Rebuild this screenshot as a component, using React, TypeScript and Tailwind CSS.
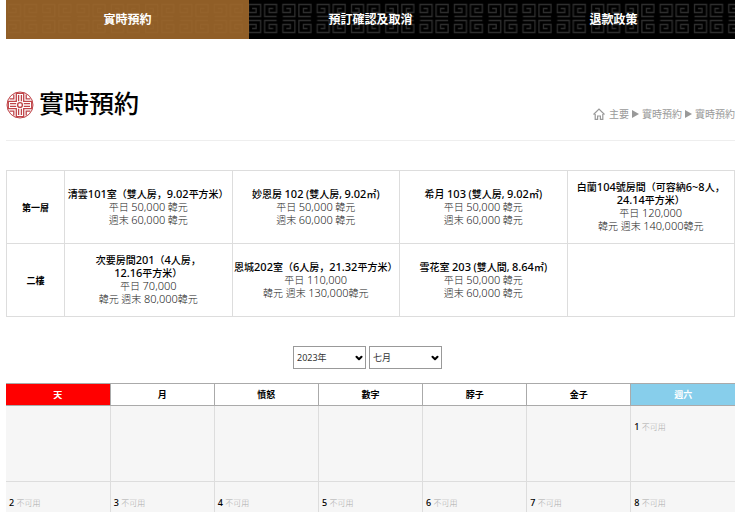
import { ChevronDown } from "lucide-react";
import { Fragment } from "react";

const menu = [
  { label: "實時預約", active: true },
  { label: "預訂確認及取消", active: false },
  { label: "退款政策", active: false },
];

const floors = [
  {
    name: "第一層",
    rooms: [
      { title: ["清雲101室（雙人房，9.02平方米）"], prices: ["平日 50,000 韓元", "週末 60,000 韓元"] },
      { title: ["妙恩房 102 (雙人房, 9.02㎡)"], prices: ["平日 50,000 韓元", "週末 60,000 韓元"] },
      { title: ["希月 103 (雙人房, 9.02㎡)"], prices: ["平日 50,000 韓元", "週末 60,000 韓元"] },
      { title: ["白蘭104號房間（可容納6~8人，", "24.14平方米）"], prices: ["平日 120,000", "韓元 週末 140,000韓元"] },
    ],
  },
  {
    name: "二樓",
    rooms: [
      { title: ["次要房間201（4人房，", "12.16平方米）"], prices: ["平日 70,000", "韓元 週末 80,000韓元"] },
      { title: ["恩城202室（6人房，21.32平方米）"], prices: ["平日 110,000", "韓元 週末 130,000韓元"] },
      { title: ["雪花室 203 (雙人間, 8.64㎡)"], prices: ["平日 50,000 韓元", "週末 60,000 韓元"] },
      { title: [], prices: [] },
    ],
  },
];

const weekdays = ["天", "月", "憤怒", "數字", "脖子", "金子", "週六"];
const weeks = [
  [0, 0, 0, 0, 0, 0, 1],
  [2, 3, 4, 5, 6, 7, 8],
];

function FretPattern() {
  return (
    <svg className="absolute inset-0 h-full w-full" aria-hidden="true">
      <defs>
        <path
          id="spiral"
          d="M0.5 12.5H12.5V0.5H0.5V8.5H8V4.5H4"
          fill="none"
          stroke="#2e2e2e"
          strokeWidth="1.3"
        />
        <pattern id="fret" width="34.3" height="39" patternUnits="userSpaceOnUse">
          <use href="#spiral" transform="translate(2 4)" />
          <use href="#spiral" transform="translate(31 4) scale(-1 1)" />
          <use href="#spiral" transform="translate(2 33) scale(1 -1)" />
          <use href="#spiral" transform="translate(31 33) scale(-1 -1)" />
        </pattern>
      </defs>
      <rect width="100%" height="100%" fill="url(#fret)" />
    </svg>
  );
}

function Seal() {
  return (
    <svg viewBox="0 0 28 28" className="mt-1 size-7 shrink-0" fill="none" stroke="#bf4449" strokeWidth="1.3" aria-hidden="true">
      <circle cx="14" cy="14" r="13" strokeWidth="1" />
      <circle cx="14" cy="14" r="2.4" strokeWidth="1.4" />
      {[0, 90, 180, 270].map((angle) => (
        <g key={angle} transform={`rotate(${angle} 14 14)`}>
          <path d="M12.6 4V10.2M15.4 4V10.2M10.3 1.8V10.3H1.8M7.8 3.6V7.8H3.6M10.3 2.3H17.7" />
        </g>
      ))}
    </svg>
  );
}

function HomeIcon() {
  return (
    <svg viewBox="0 0 12 12" className="mr-px size-3" fill="none" stroke="#999" strokeWidth="1.2" aria-hidden="true">
      <path d="M0.5 6.5L6 1L11.5 6.5M2.2 6V11.4H4.6V8H7.4V11.4H9.8V6" />
    </svg>
  );
}

function Arrow() {
  return (
    <svg viewBox="0 0 7 8" className="h-2 w-[7px]" fill="#999" aria-hidden="true">
      <path d="M0 0L7 4L0 8Z" />
    </svg>
  );
}

// The digits are set one size larger than the characters around them.
function Mixed({ text }: { text: string }) {
  return (
    <>
      {text.split(/([\d.,~]*\d)/).map((part, i) =>
        i % 2 ? <span key={i} className="text-[11px] leading-none">{part}</span> : <Fragment key={i}>{part}</Fragment>
      )}
    </>
  );
}

function Picker({ label, options }: { label: string; options: string[] }) {
  return (
    <div className="relative">
      <select
        aria-label={label}
        className="block h-[23px] w-[73px] appearance-none border border-[#999] bg-white pl-[3px] text-[9px] text-[#333]"
      >
        {options.map((option) => (
          <option key={option}>{option}</option>
        ))}
      </select>
      <ChevronDown className="pointer-events-none absolute top-[7px] right-[2px] size-[10px] text-black" strokeWidth={5} />
    </div>
  );
}

export default function App() {
  return (
    <div className="h-screen overflow-hidden bg-white pr-[5px] pl-[6px] font-['Noto_Sans','Noto_Sans_CJK_KR',sans-serif] text-[#222]">
      <nav className="relative bg-black">
        <FretPattern />
        <ul className="relative grid grid-cols-3">
          {menu.map((item) => (
            <li key={item.label}>
              <a
                href="#"
                className={`flex h-[39px] items-center justify-center text-xs font-bold text-white ${
                  item.active ? "bg-[#a0682b]/90" : ""
                }`}
              >
                {item.label}
              </a>
            </li>
          ))}
        </ul>
      </nav>

      <header className="mt-[46px] flex items-end justify-between border-b border-[#eee] pb-[19px]">
        <div className="flex items-center gap-[5px]">
          <Seal />
          <h1 className="text-[25px] leading-9 font-medium text-black">實時預約</h1>
        </div>
        <div className="flex items-center gap-[3px] text-[10px] leading-[14px] text-[#999]">
          <HomeIcon />
          <a href="#">主要</a>
          <Arrow />
          <a href="#">實時預約</a>
          <Arrow />
          <a href="#">實時預約</a>
        </div>
      </header>

      <table className="mt-[29px] w-full table-fixed border-collapse text-center text-[10px] leading-[13px]">
        <colgroup>
          <col className="w-[58px]" />
          <col />
          <col />
          <col />
          <col />
        </colgroup>
        <tbody>
          {floors.map((floor) => (
            <tr key={floor.name} className="h-[73px]">
              <th className="border border-[#ddd] text-[9px] font-bold text-black">{floor.name}</th>
              {floor.rooms.map((room, i) => (
                <td key={i} className="border border-[#ddd] whitespace-nowrap">
                  {room.title.map((line) => (
                    <strong key={line} className="block font-medium text-black">
                      <Mixed text={line} />
                    </strong>
                  ))}
                  {room.prices.map((line) => (
                    <p key={line} className="font-light">
                      <Mixed text={line} />
                    </p>
                  ))}
                </td>
              ))}
            </tr>
          ))}
        </tbody>
      </table>

      <form className="mt-[29px] flex justify-center gap-[3px] pr-[6px]">
        <Picker label="年" options={["2023年", "2024年"]} />
        <Picker label="月" options={["七月", "八月", "九月"]} />
      </form>

      <table className="mt-[14px] w-full table-fixed border-collapse text-[9px]">
        <thead>
          <tr className="h-[22px]">
            {weekdays.map((day, i) => (
              <th
                key={day}
                className={`border border-[#aaa] font-bold ${
                  i === 0
                    ? "border-l-0 bg-[red] text-white"
                    : i === 6
                      ? "border-r-0 bg-[#87ceeb] text-white"
                      : "text-black"
                }`}
              >
                {day}
              </th>
            ))}
          </tr>
        </thead>
        <tbody>
          {weeks.map((week, w) => (
            <tr key={w} className="h-[76px] bg-[#f6f6f6]">
              {week.map((day, i) => (
                <td key={i} className="border border-[#ddd] px-[3px] pt-[14px] align-top first:border-l-0 last:border-r-0">
                  {day > 0 && (
                    <>
                      <span className="font-medium text-black">{day}</span>{" "}
                      <span className="text-[8px] font-light text-[#aaa]">不可用</span>
                    </>
                  )}
                </td>
              ))}
            </tr>
          ))}
        </tbody>
      </table>
    </div>
  );
}
